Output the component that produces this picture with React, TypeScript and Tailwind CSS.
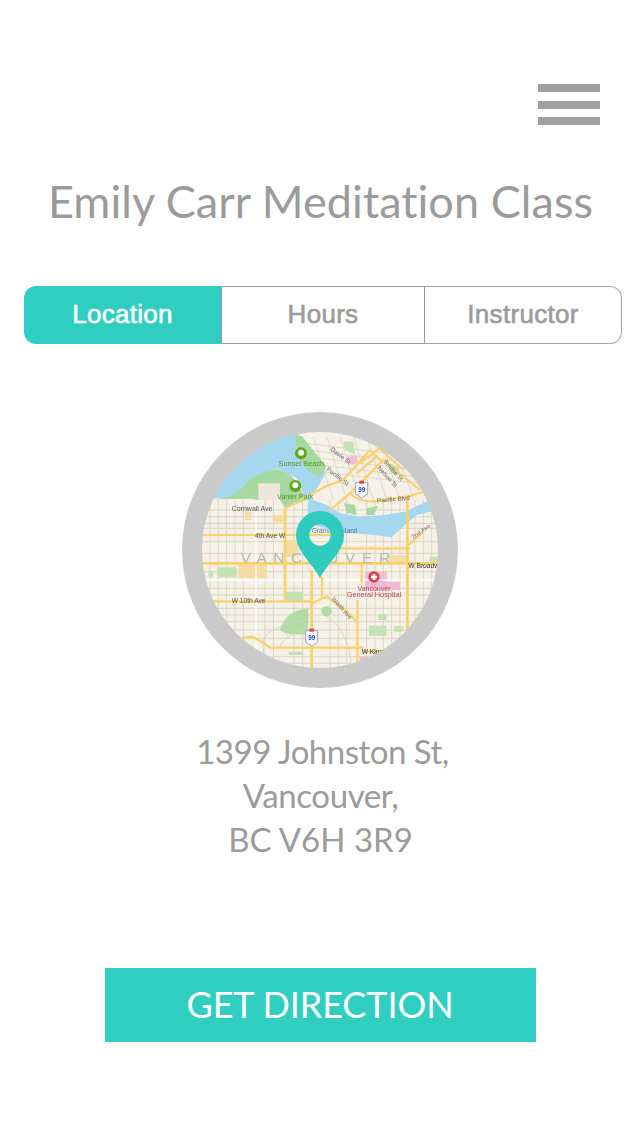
import React from "react";

const vLines = [120,145,170,195,220,285,310,372,398,480,505,530,590,615,640,665,690,735,760,785];
const hLines = [330,350,370,385,425,460,515,565,585,625,645,665,690,715,770,790];

const sans = "Liberation Sans, sans-serif";

function MapArt() {
  return (
    <svg viewBox="96 96 708 708" className="w-[236px] h-[236px] block">
      <defs>
        <clipPath id="mapClip"><circle cx="450" cy="450" r="354" /></clipPath>
        <filter id="soft"><feGaussianBlur stdDeviation="1.4" /></filter>
      </defs>
      <g clipPath="url(#mapClip)">
        <g filter="url(#soft)">
          <rect x="96" y="96" width="708" height="708" fill="#f5f1e6" />
          {hLines.map((y) => <line key={y} x1="96" x2="804" y1={y} y2={y} stroke="#d5d0c0" strokeWidth="2.5" />)}
          {vLines.map((x) => <line key={x} x1={x} x2={x} y1="300" y2="804" stroke="#d5d0c0" strokeWidth="2.5" />)}
          {[130,150,170,190,210].map((y) => <line key={y} x1="410" x2="740" y1={y} y2={y + 40} stroke="#d9d4c5" strokeWidth="2.5" />)}
          {[430,470,510,550,590,630,670].map((x) => <line key={x} x1={x} x2={x + 60} y1="110" y2="300" stroke="#d9d4c5" strokeWidth="2.5" />)}

          <path d="M96 96H400L375 110L395 160L440 200L470 215L420 300L410 300L380 235L320 205L270 225L235 265L195 295H96Z" fill="#a5d8ef" />
          <path d="M130 298C170 296 200 285 225 255C250 220 290 215 320 207C345 215 370 225 385 255L410 300L345 325L330 300L265 300L245 296Z" fill="#a6d8a0" />
          <path d="M375 105L395 108L470 200L450 230L415 215L385 165Z" fill="#a6d8a0" />
          <path d="M265 250L330 250L330 300L265 300Z" fill="#ece7da" />
          <path d="M415 295L470 315L510 340L570 350L640 345L705 335L785 298L804 300V330L740 345L705 375L665 412L610 405L530 398L440 378L412 340Z" fill="#a5d8ef" />
          <path d="M522 310L555 315L560 345L530 338Z M590 325L625 318L610 345L590 345Z" fill="#a6d8a0" />
          <path d="M520 125L550 125L555 165L525 150Z M660 190L690 205L680 225L660 215Z" fill="#c4e2b4" />
          <path d="M530 170L560 165L565 190L545 195Z" fill="#f3bfd3" />

          <path d="M345 420H385V470H345Z M205 495H290V535H205Z M225 335H245V360H225Z M310 345H340V370H310Z M655 465H710V490H655Z" fill="#f6dca2" />
          <path d="M142 502H200V532H142Z M115 517H130V532H115Z M345 575H400V605H345Z M597 677H650V708H597Z M672 678H700V695H672Z M625 642H650V660H625Z M778 470H804V486H778Z M356 755H395V765H356Z" fill="#c4e2b4" />
          <path d="M330 690C340 650 370 630 415 625V705C380 700 350 710 330 690Z" fill="#b2dca6" />
          <circle cx="470" cy="634" r="16" fill="#b2dca6" />
          <path d="M585 515H650V545H690V570H585Z" fill="#f3bad3" />
          <path d="M568 770H595V790H568Z" fill="#f3bad3" />

          <g fill="none" stroke="#ffffff" strokeWidth="4">
            <line x1="96" x2="804" y1="540" y2="540" />
            <line x1="258" x2="258" y1="320" y2="804" />
            <path d="M280 805V720C290 690 350 670 415 660M470 650C520 680 540 740 545 800M330 740C350 700 390 690 420 690" strokeWidth="2.5" stroke="#d5d0c0" />
          </g>
          <g fill="none" stroke="#fbd06a" strokeWidth="6.5">
            <line x1="96" x2="520" y1="405" y2="405" />
            <line x1="96" x2="804" y1="490" y2="490" strokeWidth="8" />
            <line x1="510" x2="720" y1="445" y2="445" />
            <line x1="130" x2="425" y1="604" y2="604" />
            <path d="M218 715C250 700 270 725 300 743H580" />
            <path d="M580 755H690" />
            <line x1="345" x2="345" y1="325" y2="600" strokeWidth="8" />
            <line x1="425" x2="425" y1="510" y2="805" strokeWidth="8" />
            <line x1="456" x2="456" y1="530" y2="592" />
            <line x1="562" x2="562" y1="600" y2="800" />
            <line x1="712" x2="712" y1="290" y2="720" strokeWidth="8" />
            <path d="M345 325L470 258L520 240L600 150" />
            <path d="M480 330L540 280L640 180L700 230L750 270" />
            <path d="M540 280C580 320 640 300 712 290L780 270" />
            <path d="M425 610L470 590C500 610 540 640 560 665" />
            <path d="M600 150L640 190M570 190L660 120M710 440L760 395M600 120L700 210M560 220L620 170" />
            <path d="M575 492V550" />
          </g>

          <circle cx="393" cy="160" r="18" fill="#64a81f" />
          <circle cx="393" cy="158" r="9" fill="#fff" />
          <circle cx="376" cy="258" r="18" fill="#64a81f" />
          <circle cx="376" cy="256" r="9" fill="#fff" />
          <text x="394" y="197" textAnchor="middle" fontSize="22" fill="#4f9a23" fontFamily={sans}>Sunset Beach</text>
          <text x="376" y="296" textAnchor="middle" fontSize="21" fill="#4f9a23" fontFamily={sans}>Vanier Park</text>
          <text x="185" y="333" fontSize="21" fill="#555" fontFamily={sans}>Cornwall Ave</text>
          <text x="255" y="415" fontSize="20" fill="#555" fontFamily={sans}>4th Ave W</text>
          <text x="185" y="610" fontSize="20" fill="#555" fontFamily={sans}>W 10th Ave</text>
          <text x="480" y="150" fontSize="19" fill="#666" transform="rotate(38 480 150)" fontFamily={sans}>Davie St</text>
          <text x="468" y="210" fontSize="19" fill="#666" transform="rotate(38 468 210)" fontFamily={sans}>Pacific St</text>
          <text x="640" y="186" fontSize="18" fill="#666" transform="rotate(48 640 186)" fontFamily={sans}>Smithe St</text>
          <text x="622" y="205" fontSize="18" fill="#666" transform="rotate(48 622 205)" fontFamily={sans}>Nelson St</text>
          <text x="622" y="308" fontSize="19" fill="#666" transform="rotate(-5 622 308)" fontFamily={sans}>Pacific Blvd</text>
          <text x="730" y="418" fontSize="18" fill="#777" transform="rotate(-35 730 418)" fontFamily={sans}>2nd Ave</text>
          <text x="425" y="398" fontSize="20" fill="#4a7fb0" fontFamily={sans}>Granville Island</text>
          <text x="212" y="490" fontSize="46" letterSpacing="20" fill="#b9b7ae" fontFamily={sans}>VANCOUVER</text>
          <text x="715" y="504" fontSize="20" fill="#333" fontFamily={sans}>W Broadway</text>
          <text x="484" y="598" fontSize="18" fill="#666" transform="rotate(48 484 598)" fontFamily={sans}>Worth Ave</text>
          <text x="575" y="762" fontSize="20" fill="#333" fontFamily={sans}>W King Ed</text>
          <circle cx="612" cy="531" r="17" fill="#d9434e" />
          <path d="M608 522h8v5h5v8h-5v5h-8v-5h-5v-8h5z" fill="#fff" />
          <text x="612" y="572" textAnchor="middle" fontSize="21" fill="#b84555" fontFamily={sans}>Vancouver</text>
          <text x="612" y="592" textAnchor="middle" fontSize="22" fill="#b84555" fontFamily={sans}>General Hospital</text>

          {[[575, 268], [425, 712]].map(([x, y]) => (
            <g key={x}>
              <path d={`M${x - 18} ${y - 20}H${x + 18}V${y + 14}L${x} ${y + 26}L${x - 18} ${y + 14}Z`} fill="#fff" stroke="#8a93b5" strokeWidth="2.5" />
              <rect x={x - 7} y={y - 26} width="14" height="9" fill="#d8404a" />
              <text x={x} y={y + 9} textAnchor="middle" fontSize="19" fontWeight="700" fill="#2442b5" fontFamily={sans}>99</text>
            </g>
          ))}
        </g>
        <path fillRule="evenodd" d="M450 535C428 490 378 455 378 405A72 72 0 1 1 522 405C522 455 472 490 450 535ZM450 373A32 32 0 1 0 450 437A32 32 0 1 0 450 373Z" fill="#2fcbbf" />
      </g>
    </svg>
  );
}

export default function App() {
  const gill = "font-['Lato','Open_Sans',sans-serif] [font-variant-ligatures:none]";
  return (
    <div className="w-[641px] h-[1137px] bg-white flex flex-col items-center overflow-hidden">
      <div className="w-full flex justify-end pt-[84px] pr-[41px]">
        <div className="w-[62px] flex flex-col gap-[8.5px]">
          <div className="h-2 bg-[#a0a0a0]" />
          <div className="h-2 bg-[#a0a0a0]" />
          <div className="h-2 bg-[#a0a0a0]" />
        </div>
      </div>
      <h1 className={`${gill} mt-[48px] h-[56px] leading-[56px] text-[45px] tracking-[0.07px] font-normal text-[#9b9b9b] whitespace-nowrap`}>
        Emily Carr Meditation Class
      </h1>
      <div className="mt-[57px] ml-[5px] w-[598px] h-[58px] flex font-['Liberation_Sans',sans-serif] text-[26px] [-webkit-text-stroke:0.6px] tracking-[0.3px]">
        <div className="w-[197px] pb-[2px] bg-[#30cdc1] text-white rounded-l-[12px] flex items-center justify-center">Location</div>
        <div className="w-[204px] pb-[2px] border border-[#9b9b9b] text-[#9b9b9b] flex items-center justify-center">Hours</div>
        <div className="w-[197px] pb-[2px] border border-l-0 border-[#a5a5a5] text-[#9b9b9b] rounded-r-[12px] flex items-center justify-center">Instructor</div>
      </div>
      <div className="mt-[68px] mr-[1px] w-[276px] h-[276px] rounded-full bg-[#cacaca] flex items-center justify-center">
        <MapArt />
      </div>
      <div className={`${gill} mt-[41px] text-center text-[33px] leading-[44px] tracking-[-0.4px] font-normal text-[#9b9b9b]`}>
        <div className="pl-[4px] tracking-[-0.5px]">1399 Johnston St,</div>
        <div>Vancouver,</div>
        <div className="tracking-[0px]">BC V6H 3R9</div>
      </div>
      <div className={`${gill} mt-[107px] mr-[1px] pb-[2px] w-[431px] h-[74px] bg-[#30cdc1] text-white text-[36px] tracking-[-0.1px] font-normal flex items-center justify-center`}>
        GET DIRECTION
      </div>
    </div>
  );
}
